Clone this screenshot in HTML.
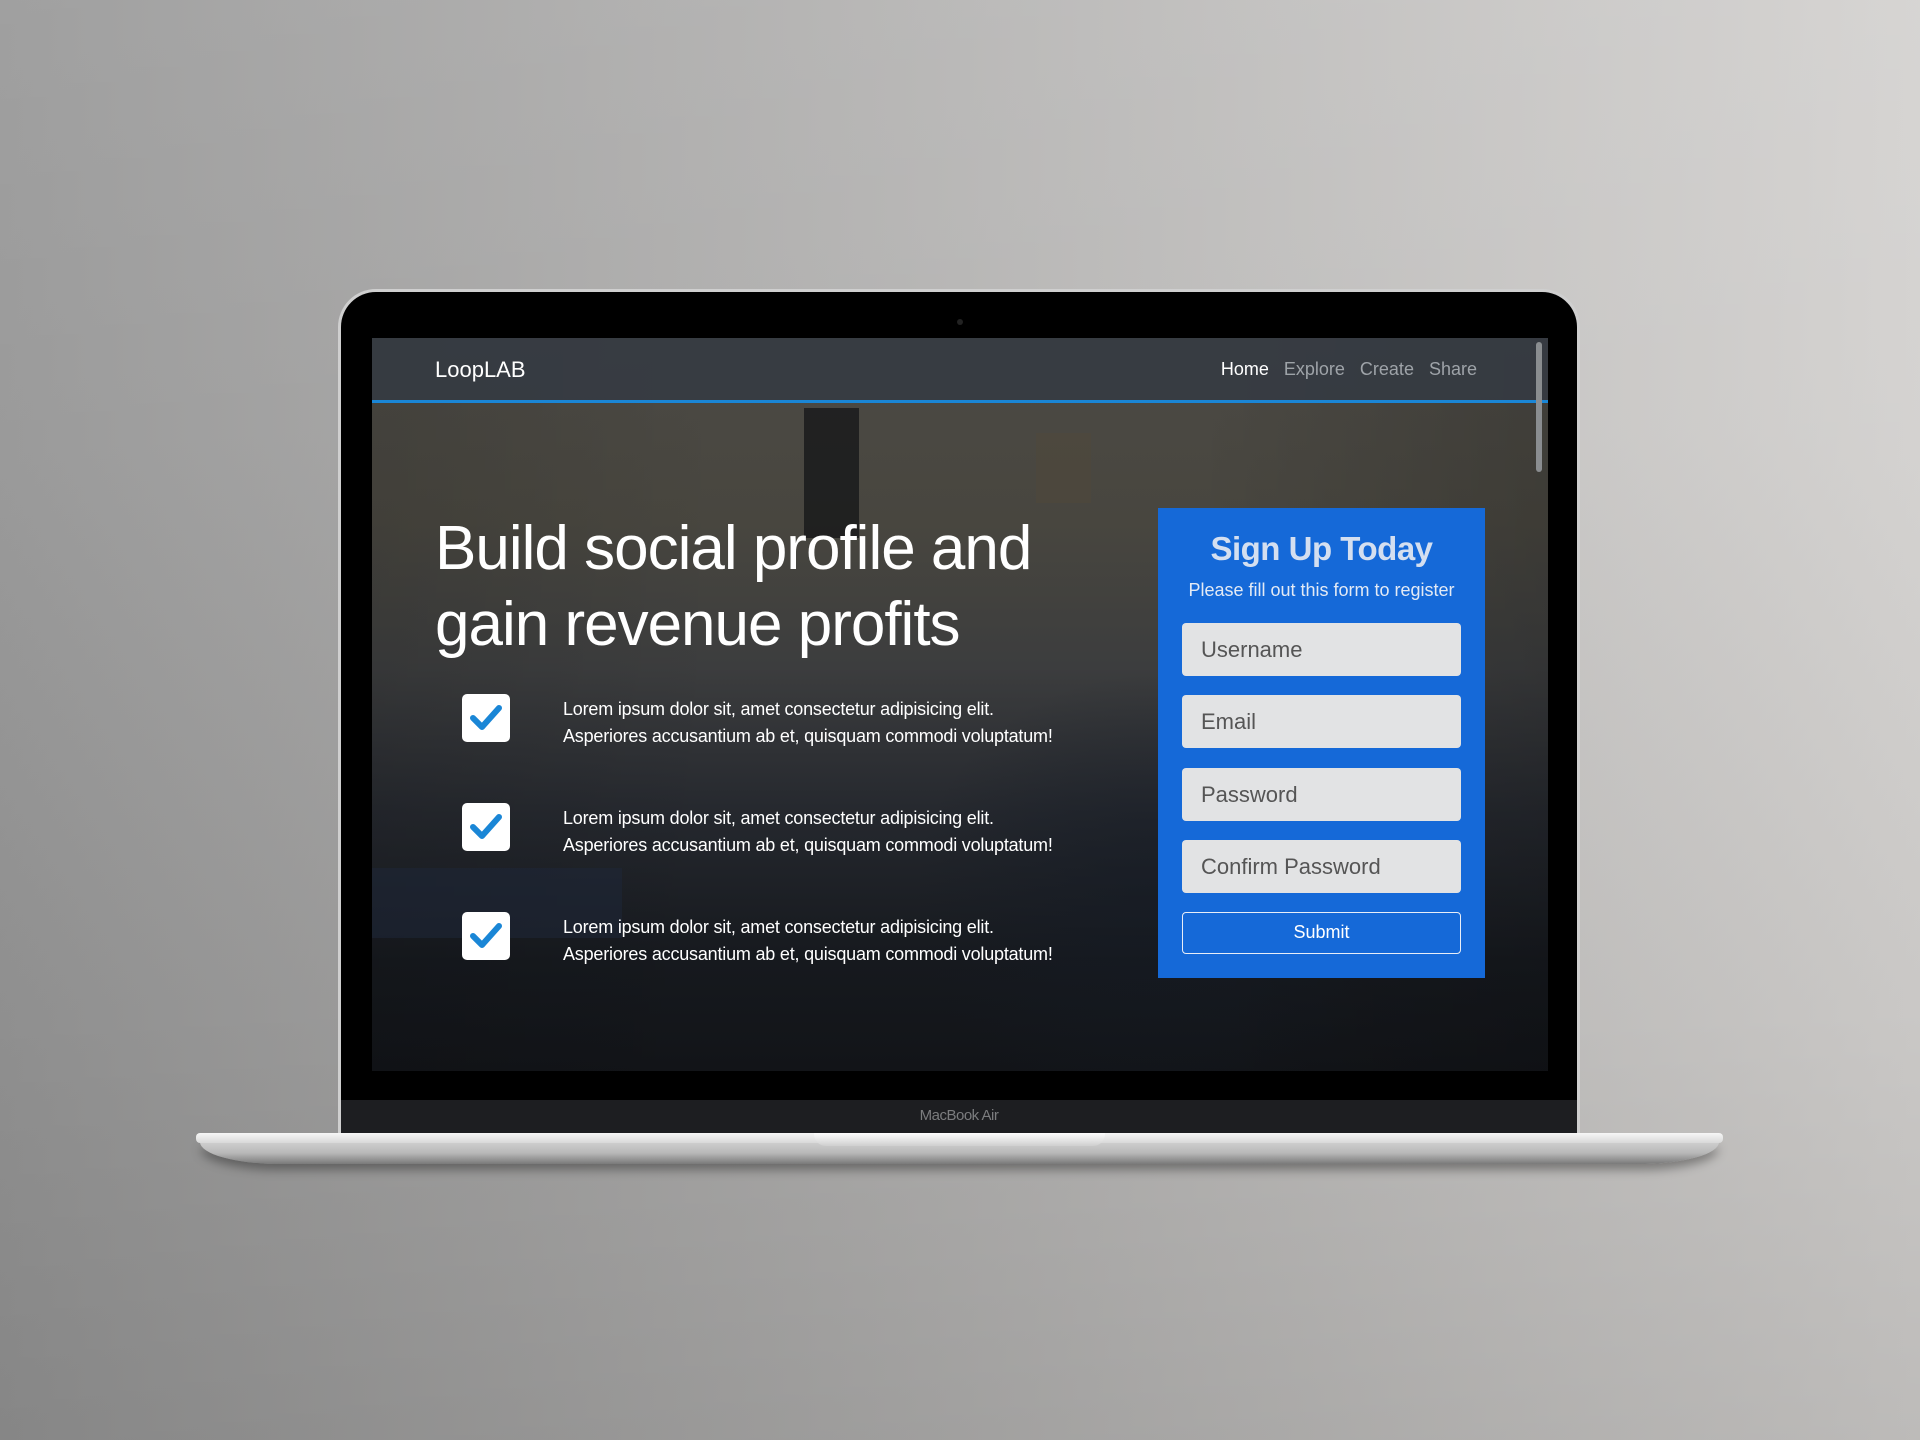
<!DOCTYPE html>
<html><head><meta charset="utf-8">
<style>
*{margin:0;padding:0;box-sizing:border-box}
html,body{width:1920px;height:1440px;overflow:hidden}
body{background:linear-gradient(90deg,#959595 0%,#b0afae 45%,#d2d0ce 100%);position:relative;font-family:"Liberation Sans",sans-serif}
.shade{position:absolute;inset:0;background:linear-gradient(180deg,rgba(255,255,255,0.1) 0%,rgba(255,255,255,0.05) 30%,rgba(0,0,0,0.04) 70%,rgba(0,0,0,0.1) 100%)}
.lid{position:absolute;left:338px;top:289px;width:1242px;height:850px;border-radius:38px 38px 0 0;background:#000;border:3px solid #cfcfcf;border-bottom:none}
.cam{position:absolute;left:957px;top:319px;width:6px;height:6px;border-radius:50%;background:#222}
.screen{position:absolute;left:372px;top:338px;width:1176px;height:733px;overflow:hidden;
background:
radial-gradient(ellipse 320px 300px at 780px 560px,rgba(20,26,36,0.55),rgba(0,0,0,0) 75%),
linear-gradient(90deg,rgba(0,0,0,0.1),rgba(0,0,0,0) 30%,rgba(0,0,0,0) 70%,rgba(0,0,0,0.15)),
linear-gradient(180deg,#4c4a45 0%,#48463f 25%,#3c3d3e 45%,#25282e 65%,#16191e 85%,#121418 100%);}
.win{position:absolute;left:432px;top:70px;width:55px;height:130px;background:rgba(15,17,20,0.7)}
.win2{position:absolute;left:664px;top:95px;width:55px;height:70px;background:rgba(80,72,58,0.5)}
.bench{position:absolute;left:0;top:530px;width:250px;height:70px;background:rgba(30,38,55,0.6)}
.nav{position:absolute;left:0;top:0;width:1176px;height:65px;background:rgba(52,58,66,0.88);border-bottom:3px solid #1a86d6}
.brand{position:absolute;left:63px;top:19px;color:#fff;font-size:22px}
.links{position:absolute;right:71px;top:21px;font-size:18px;color:#9ea3a8}
.links span{margin-left:15px}
.links .a{color:#fff}
.scroll{position:absolute;right:6px;top:4px;width:6px;height:130px;border-radius:3px;background:#8a8d90}
h1{position:absolute;left:63px;top:173px;color:#fff;font-weight:300;font-size:62px;line-height:76px;letter-spacing:-1px}
.cb{position:absolute;left:90px;width:48px;height:48px;background:#fff;border-radius:5px}
.cb svg{position:absolute;left:6px;top:6px}
.txt{position:absolute;left:191px;color:#fff;font-size:18px;line-height:27px;letter-spacing:-0.2px}
.form{position:absolute;left:786px;top:170px;width:327px;height:470px;background:#1569d8}
.form h2{position:absolute;top:22px;width:100%;text-align:center;color:#d4dff0;font-size:33px;font-weight:bold;letter-spacing:-0.5px}
.form p{position:absolute;top:72px;width:100%;text-align:center;color:#e3eaf5;font-size:18px}
.inp{position:absolute;left:24px;width:279px;height:53px;background:#e2e3e4;border-radius:4px;color:#555;font-size:22px;padding:14px 0 0 19px}
.sub{position:absolute;left:24px;top:404px;width:279px;height:42px;border:1.5px solid #e8eef8;border-radius:4px;color:#fff;font-size:18px;text-align:center;line-height:39px}
.chin{position:absolute;left:341px;top:1100px;width:1236px;height:34px;background:#1d1e21;color:#7b7c7e;font-size:15px;text-align:center;line-height:32px;letter-spacing:-0.5px}
.base{position:absolute;left:196px;top:1133px;width:1527px;height:10px;border-radius:4px;background:linear-gradient(180deg,#f6f6f6,#d8d8d8);z-index:2}
.base2{position:absolute;left:200px;top:1142px;width:1519px;height:22px;border-radius:0 0 80px 80px/0 0 22px 22px;background:linear-gradient(180deg,#cfcfcf 0%,#b8b8b8 50%,#7a7a7a 100%);box-shadow:0 6px 10px rgba(0,0,0,0.35)}
.notch{position:absolute;left:618px;top:0;width:291px;height:13px;border-radius:0 0 12px 12px;background:linear-gradient(180deg,#fefefe,#cfcfcf)}
</style></head><body>
<div class="shade"></div>
<div class="lid"></div>
<div class="cam"></div>
<div class="screen">
  <div class="win"></div><div class="win2"></div>
  <div class="bench"></div>
  <div class="nav">
    <div class="brand">LoopLAB</div>
    <div class="links"><span class="a">Home</span><span>Explore</span><span>Create</span><span>Share</span></div>
  </div>
  <div class="scroll"></div>
  <h1>Build social profile and<br>gain revenue profits</h1>
  <div class="cb" style="top:356px"><svg width="36" height="36" viewBox="0 0 36 36"><path d="M5 18 L14 27 L31 8" stroke="#1a86d6" stroke-width="6" fill="none" stroke-linecap="round" stroke-linejoin="round"/></svg></div>
  <div class="txt" style="top:358px">Lorem ipsum dolor sit, amet consectetur adipisicing elit.<br>Asperiores accusantium ab et, quisquam commodi voluptatum!</div>
  <div class="cb" style="top:465px"><svg width="36" height="36" viewBox="0 0 36 36"><path d="M5 18 L14 27 L31 8" stroke="#1a86d6" stroke-width="6" fill="none" stroke-linecap="round" stroke-linejoin="round"/></svg></div>
  <div class="txt" style="top:467px">Lorem ipsum dolor sit, amet consectetur adipisicing elit.<br>Asperiores accusantium ab et, quisquam commodi voluptatum!</div>
  <div class="cb" style="top:574px"><svg width="36" height="36" viewBox="0 0 36 36"><path d="M5 18 L14 27 L31 8" stroke="#1a86d6" stroke-width="6" fill="none" stroke-linecap="round" stroke-linejoin="round"/></svg></div>
  <div class="txt" style="top:576px">Lorem ipsum dolor sit, amet consectetur adipisicing elit.<br>Asperiores accusantium ab et, quisquam commodi voluptatum!</div>
  <div class="form">
    <h2>Sign Up Today</h2>
    <p>Please fill out this form to register</p>
    <div class="inp" style="top:115px">Username</div>
    <div class="inp" style="top:187px">Email</div>
    <div class="inp" style="top:260px">Password</div>
    <div class="inp" style="top:332px">Confirm Password</div>
    <div class="sub">Submit</div>
  </div>
</div>
<div class="chin">MacBook Air</div>
<div class="base2"></div>
<div class="base"><div class="notch"></div></div>
</body></html>
